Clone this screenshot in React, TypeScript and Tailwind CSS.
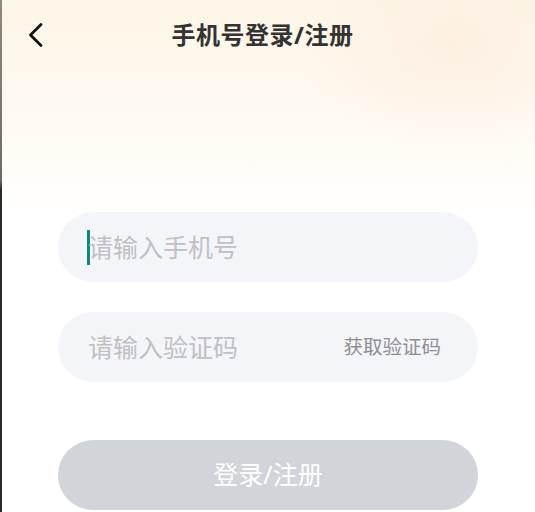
export default function App() {
  return (
    <div
      className="relative min-h-[512px] w-full overflow-hidden bg-white bg-[radial-gradient(ellipse_160px_110px_at_455px_45px,#fdf0e3_0%,rgba(253,240,227,0)_100%),linear-gradient(180deg,#fdf6e7_0px,#fef8ee_90px,#fffcf7_160px,#ffffff_215px)]"
      style={{ fontFamily: '"Noto Sans", "Noto Sans CJK SC", sans-serif' }}
    >
      <div className="absolute left-0 top-0 h-full w-[2px] bg-[linear-gradient(180deg,#8a8a80_0px,#6b6b66_180px,#2a2a2a_190px,#2a2a2a_100%)]" />

      <header className="relative flex h-[70px] items-center justify-center">
        <button className="absolute left-[27px] top-[22px] text-[#111]">
          <svg width="18" height="26" viewBox="0 0 18 26" fill="none">
            <polyline
              points="14,2.5 3.5,13 14,23.5"
              stroke="currentColor"
              strokeWidth="2.8"
              strokeLinecap="round"
              strokeLinejoin="round"
            />
          </svg>
        </button>
        <h1 className="ml-[-10px] text-[24px] font-bold leading-none tracking-[0.5px] text-[#333]">
          手机号登录/注册
        </h1>
      </header>

      <main className="flex flex-col pl-[58px] pr-[57px] pt-[142px]">
        <div className="flex h-[70px] items-center rounded-full bg-[#f4f5f9] px-[29px]">
          <span className="mr-[-2px] h-[35px] w-[3px] bg-[#0e8a7b]" />
          <span className="text-[25px] leading-none text-[#c0c0c4]">请输入手机号</span>
        </div>

        <div className="mt-[30px] flex h-[70px] items-center justify-between rounded-full bg-[#f4f5f9] pl-[30px] pr-[37px]">
          <span className="text-[25px] leading-none text-[#c0c0c4]">请输入验证码</span>
          <span className="text-[19.5px] leading-none text-[#8e8e93]">获取验证码</span>
        </div>

        <button className="mt-[58px] flex h-[70px] items-center justify-center rounded-full bg-[#d1d4d9] text-[25px] text-white">
          登录/注册
        </button>
      </main>
    </div>
  );
}
